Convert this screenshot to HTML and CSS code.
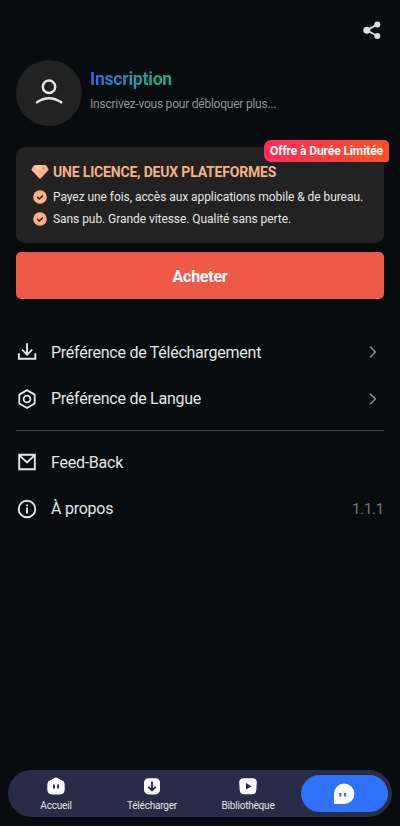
FILE: index.html
```html
<!DOCTYPE html>
<html lang="fr">
<head>
<meta charset="utf-8">
<meta name="viewport" content="width=device-width, initial-scale=1">
<title>Profil</title>
<link rel="stylesheet" href="styles.css">
</head>
<body>
<div class="screen">
  <header class="topbar">
    <svg class="share" viewBox="0 0 20 20" width="20" height="20"><path d="M15 4.6 5 10.2 15 16" fill="none" stroke="currentColor" stroke-width="1.9"/><g fill="currentColor"><circle cx="15.3" cy="4.6" r="3"/><circle cx="4.8" cy="10.3" r="3.5"/><circle cx="15.3" cy="16" r="3"/></g></svg>
  </header>

  <section class="profile">
    <div class="avatar">
      <svg viewBox="0 0 30 28" width="30" height="28" fill="none" stroke="currentColor" stroke-width="2.5" stroke-linecap="round"><circle cx="15" cy="7.8" r="6.2"/><path d="M3 23.2Q15 15.200 27.2 23.200"/></svg>
    </div>
    <div class="profile-text">
      <h1 class="name">Inscription</h1>
      <p class="hint">Inscrivez-vous pour débloquer plus...</p>
    </div>
  </section>

  <section class="offer">
    <span class="badge">Offre à Durée Limitée</span>
    <h2 class="offer-line offer-title">
      <svg viewBox="0 0 18 16" width="18" height="16"><path d="M4 1h10q.7 0 1.200.6l2.300 3.300q.5.700-.1 1.400L10.100 14q-1.100 1.100-2.200 0L.7 6.300Q0 5.600.6 4.900L2.800 1.600Q3.200 1 4 1z" fill="#ffb185"/><path d="M3.500 1.800 9 1l-3.500 5zM.8 6h4.700L9 14z" fill="#ffc9a8"/><path d="m9 1 3.500 5H5.500z" fill="#ffc39e"/><path d="M11 4.200h2.500" stroke="#d77d5a" stroke-width="1"/></svg>
      <span>UNE LICENCE, DEUX PLATEFORMES</span>
    </h2>
    <p class="offer-line">
      <svg viewBox="0 0 14 14" width="14" height="14"><circle cx="7" cy="7" r="6.800" fill="#ffb184"/><path d="m4.200 7 2.100 2 3.600-3.500" fill="none" stroke="#222" stroke-width="1.600"/></svg>
      <span>Payez une fois, accès aux applications mobile &amp; de bureau.</span>
    </p>
    <p class="offer-line">
      <svg viewBox="0 0 14 14" width="14" height="14"><circle cx="7" cy="7" r="6.800" fill="#ffb184"/><path d="m4.200 7 2.100 2 3.600-3.500" fill="none" stroke="#222" stroke-width="1.600"/></svg>
      <span>Sans pub. Grande vitesse. Qualité sans perte.</span>
    </p>
  </section>

  <button class="buy">Acheter</button>

  <ul class="menu">
    <li>
      <svg viewBox="0 0 22 22" width="22" height="22" fill="none" stroke="currentColor" stroke-width="1.900"><path d="M2.900 12.200v5.600h16.400v-5.600M11 2.200v11.300M6 8.600l5.100 5 5.100-5"/></svg>
      <span class="label">Préférence de Téléchargement</span>
      <svg class="chevron" viewBox="0 0 8 14" width="8" height="14"><path d="m1 1.700 5.400 5.300L1 12.300"/></svg>
    </li>
    <li>
      <svg viewBox="0 0 22 22" width="22" height="22" fill="none" stroke="currentColor" stroke-width="1.800"><path d="m11 2.100 7.700 4.500v8.900L11 20l-7.700-4.500V6.600z"/><circle cx="11" cy="11" r="3.400"/></svg>
      <span class="label">Préférence de Langue</span>
      <svg class="chevron" viewBox="0 0 8 14" width="8" height="14"><path d="m1 1.700 5.400 5.300L1 12.300"/></svg>
    </li>
  </ul>
  <ul class="menu menu-secondary">
    <li>
      <svg viewBox="0 0 22 22" width="22" height="22" fill="none" stroke="currentColor" stroke-width="1.900"><path d="M3.200 3.800h15.600v14.400H3.200zM3.800 4.600l7.200 6.900 7.200-6.900"/></svg>
      <span class="label">Feed-Back</span>
    </li>
    <li>
      <svg viewBox="0 0 22 22" width="22" height="22" fill="none" stroke="currentColor" stroke-width="1.900"><circle cx="11" cy="11" r="8.300"/><path d="M11 9.400v6M11 6.400v1.800"/></svg>
      <span class="label">À propos</span>
      <span class="version">1.1.1</span>
    </li>
  </ul>

  <nav class="tabs">
    <a class="tab">
      <svg viewBox="0 0 20 20" width="20" height="20"><path d="M8.500 1.900q1.500-.9 3 0l5.200 2.900q1.700 1 1.900 2.900l.2 4.800q0 5.900-4.800 5.900H6q-4.800 0-4.800-5.900l.2-4.800q.2-1.900 1.900-2.900z" fill="#fff"/><path d="M8 8.400v4M12.100 8.400v4" stroke="#282c47" stroke-width="1.900"/></svg>
      <span>Accueil</span>
    </a>
    <a class="tab">
      <svg viewBox="0 0 20 20" width="20" height="20"><rect x="2" y="2.200" width="16" height="16.200" rx="4.600" fill="#fff"/><path d="M10 5.700v8.600M6.300 10.800l3.700 3.700 3.700-3.700" fill="none" stroke="#282c47" stroke-width="1.900"/></svg>
      <span>Télécharger</span>
    </a>
    <a class="tab">
      <svg viewBox="0 0 20 20" width="20" height="20"><path d="M5.500 2.300h9q4.300 0 4.300 4.300l-.5 7.700q-.4 4-4.300 4H6q-3.900 0-4.300-4l-.5-7.700q0-4.300 4.300-4.300z" fill="#fff"/><path d="m8 7 5.500 3.300L8 13.600z" fill="#282c47"/></svg>
      <span>Bibliothèque</span>
    </a>
    <a class="tab tab-active">
      <svg viewBox="0 0 22 22" width="22" height="22"><path d="M1 21V11A10.200 10.200 0 1 1 11.200 21z" fill="#fff"/><path d="M7.200 10v3.600M12 10v3.600" stroke="#3172fb" stroke-width="2.200"/></svg>
    </a>
  </nav>
</div>
</body>
</html>
```
FILE: styles.css
```css
* { box-sizing: border-box; margin: 0; padding: 0; }

body {
  background: #080c0f;
  color: #e6e6e6;
  font-family: Roboto, "Noto Sans", sans-serif;
}

svg { display: block; flex: none; }

.screen {
  display: flex;
  flex-direction: column;
  height: 826px;
  padding: 0 16px 9px;
}

.topbar {
  display: flex;
  justify-content: flex-end;
  padding: 20px 2px 0 0;
  height: 59px;
}
.share { color: #dcdcdc; }

.profile { display: flex; align-items: center; gap: 8px; height: 67px; }
.profile-text { padding-bottom: 6px; }
.avatar {
  display: grid;
  place-items: center;
  width: 66px;
  height: 66px;
  border-radius: 50%;
  background: #222;
}
.name {
  width: max-content;
  font-size: 17.5px;
  letter-spacing: -0.2px;
  line-height: 24px;
  background: linear-gradient(90deg, #3568e8, #2497a8 50%, #16b878);
  -webkit-background-clip: text;
  background-clip: text;
  color: transparent;
}
.hint {
  margin-top: 4px;
  font-size: 12px;
  letter-spacing: -0.23px;
  line-height: 18px;
  color: #949494;
}

.offer {
  position: relative;
  height: 96px;
  margin-top: 21px;
  padding: 14px 16px;
  border-radius: 9px;
  background: #222;
}
.offer-line {
  display: grid;
  grid-template-columns: 16px auto;
  gap: 5px;
  align-items: center;
  justify-items: center;
  justify-content: start;
  height: 22px;
  font-size: 12px;
  letter-spacing: -0.06px;
  white-space: nowrap;
}
.offer-line span { justify-self: start; }
.offer-title {
  margin-bottom: 3px;
  font-size: 14px;
  letter-spacing: -0.18px;
  color: #f7b088;
}
.badge {
  position: absolute;
  top: -7px;
  right: -5px;
  width: 125px;
  height: 22px;
  border-radius: 7px 5px 3px 7px;
  background: linear-gradient(90deg, #fc2d5b, #ff5126);
  color: #fff;
  font-size: 12px;
  font-weight: 700;
  letter-spacing: -0.1px;
  line-height: 22px;
  text-align: center;
  white-space: nowrap;
}

.buy {
  height: 47px;
  margin-top: 9px;
  border: 0;
  border-radius: 5px;
  background: #ef5a48;
  color: #fff;
  font: 700 16px Roboto, sans-serif;
  letter-spacing: -0.25px;
  padding-top: 2px;
}

.menu { list-style: none; margin-top: 30px; }
.menu li {
  display: flex;
  align-items: center;
  height: 46.5px;
  font-size: 16px;
  letter-spacing: -0.25px;
}
.label { flex: 1; margin-left: 13px; }
.chevron { margin-right: 7px; fill: none; stroke: #929496; stroke-width: 1.4; }
.menu-secondary { margin-top: 8px; padding-top: 8px; border-top: 1px solid #414144; }
.version { font-size: 15px; color: #77797b; }

.tabs {
  display: grid;
  grid-template-columns: 96px 96px 96px 87px;
  height: 47px;
  margin: auto -8px 0;
  border-radius: 24px;
  background: #282c47;
}
.tab {
  display: flex;
  flex-direction: column;
  align-items: center;
  padding-top: 6px;
  font-size: 10px;
  letter-spacing: -0.2px;
  line-height: 12px;
}
.tab span { margin-top: 4px; }
.tab-active {
  justify-content: center;
  height: 37px;
  margin: 5px 0 0 4.5px;
  width: 87px;
  padding: 0;
  border-radius: 19px;
  background: #3172fb;
}
```
